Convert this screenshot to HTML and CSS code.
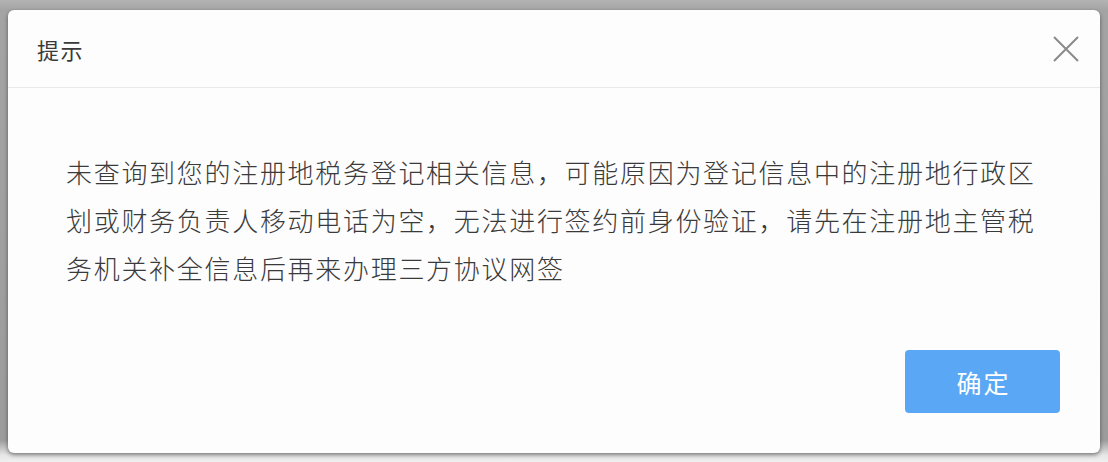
FILE: index.html
```html
<!DOCTYPE html>
<html lang="zh-CN">
<head>
<meta charset="utf-8">
<title>提示</title>
<link rel="stylesheet" href="styles.css">
</head>
<body>
<div class="dialog">
  <div class="dialog-header">
    <span class="dialog-title">提示</span>
    <span class="dialog-close" aria-label="关闭">
      <svg width="26" height="26" viewBox="0 0 26 26">
        <path d="M1 1 L25 25 M25 1 L1 25" stroke="#8a8a8a" stroke-width="2" fill="none"/>
      </svg>
    </span>
  </div>
  <div class="dialog-body">
    <p class="message">未查询到您的注册地税务登记相关信息，可能原因为登记信息中的注册地行政区<br>划或财务负责人移动电话为空，无法进行签约前身份验证，请先在注册地主管税<br>务机关补全信息后再来办理三方协议网签</p>
  </div>
  <div class="dialog-footer">
    <button class="btn-primary">确定</button>
  </div>
</div>
</body>
</html>
```

FILE: styles.css
```css
html, body {
  margin: 0;
  padding: 0;
}
body {
  width: 1108px;
  height: 462px;
  overflow: hidden;
  background: linear-gradient(to bottom, #b3b3b3 0px, #a4a4a4 10px, #9c9c9c 440px, #e6e6e6 455px, #f0f0f0 462px);
  font-family: "Noto Sans CJK SC", "Noto Sans", sans-serif;
  padding: 10px 8px 9px 8px;
  box-sizing: border-box;
}
.dialog {
  width: 1092px;
  height: 443px;
  background: #fdfdfd;
  border-radius: 6px;
  box-shadow: 0 2px 4px rgba(0, 0, 0, 0.45);
  display: flex;
  flex-direction: column;
  box-sizing: border-box;
}
.dialog-header {
  height: 78px;
  box-sizing: border-box;
  border-bottom: 1px solid #e9e9e9;
  display: flex;
  align-items: center;
  justify-content: space-between;
  padding: 0 21px 0 29px;
}
.dialog-title {
  font-size: 22px;
  letter-spacing: 1.5px;
  color: #3a3a3a;
  line-height: 24px;
}
.dialog-close {
  width: 26px;
  height: 26px;
  display: flex;
}
.dialog-body {
  flex: 1;
  padding: 60px 40px 0 58px;
}
.message {
  margin: 0;
  font-size: 26px;
  font-weight: 300;
  line-height: 48px;
  letter-spacing: 1.7px;
  color: #3a3a3a;
  white-space: nowrap;
}
.dialog-footer {
  display: flex;
  justify-content: flex-end;
  padding: 0 40px 40px 0;
}
.btn-primary {
  width: 155px;
  height: 63px;
  border: none;
  border-radius: 4px;
  background: #5aa8f5;
  color: #ffffff;
  font-family: "Noto Sans CJK SC", "Noto Sans", sans-serif;
  font-size: 25px;
  letter-spacing: 2px;
  padding: 0 0 0 2px;
}
```
